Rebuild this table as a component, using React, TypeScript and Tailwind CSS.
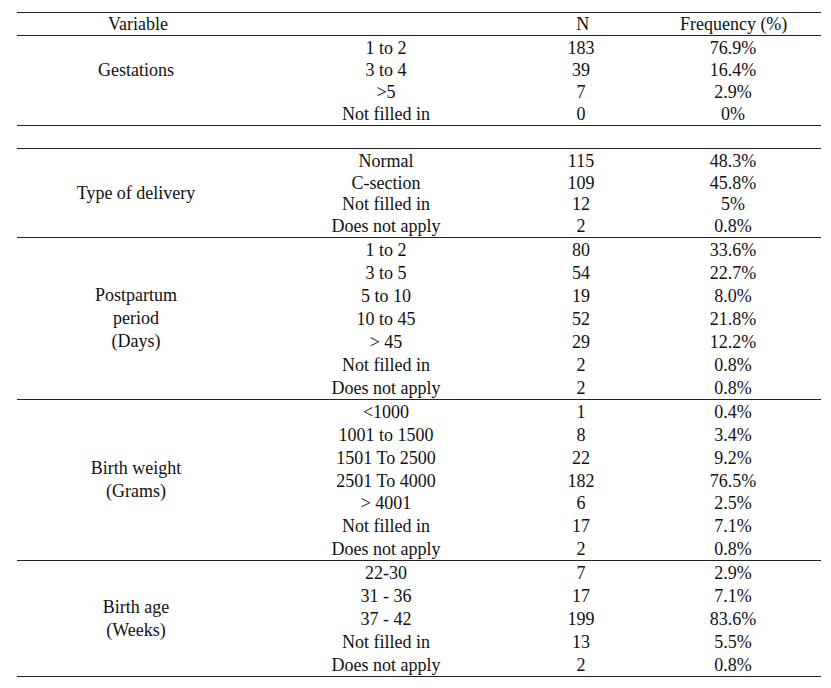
import React from 'react'

type Section = {
  label: string[]
  height: string
  labelPad?: string
  rows: [string, string, string][]
}

const sections: Section[] = [
  {
    label: ['Gestations'],
    height: 'h-[90px]',
    labelPad: 'pb-[21px]',
    rows: [
      ['1 to 2', '183', '76.9%'],
      ['3 to 4', '39', '16.4%'],
      ['>5', '7', '2.9%'],
      ['Not filled in', '0', '0%'],
    ],
  },
  {
    label: ['Type of delivery'],
    height: 'h-[89px]',
    rows: [
      ['Normal', '115', '48.3%'],
      ['C-section', '109', '45.8%'],
      ['Not filled in', '12', '5%'],
      ['Does not apply', '2', '0.8%'],
    ],
  },
  {
    label: ['Postpartum', 'period', '(Days)'],
    height: 'h-[162px]',
    rows: [
      ['1 to 2', '80', '33.6%'],
      ['3 to 5', '54', '22.7%'],
      ['5 to 10', '19', '8.0%'],
      ['10 to 45', '52', '21.8%'],
      ['> 45', '29', '12.2%'],
      ['Not filled in', '2', '0.8%'],
      ['Does not apply', '2', '0.8%'],
    ],
  },
  {
    label: ['Birth weight', '(Grams)'],
    height: 'h-[161px]',
    rows: [
      ['<1000', '1', '0.4%'],
      ['1001 to 1500', '8', '3.4%'],
      ['1501 To 2500', '22', '9.2%'],
      ['2501 To 4000', '182', '76.5%'],
      ['> 4001', '6', '2.5%'],
      ['Not filled in', '17', '7.1%'],
      ['Does not apply', '2', '0.8%'],
    ],
  },
  {
    label: ['Birth age', '(Weeks)'],
    height: 'h-[116px]',
    rows: [
      ['22-30', '7', '2.9%'],
      ['31 - 36', '17', '7.1%'],
      ['37 - 42', '199', '83.6%'],
      ['Not filled in', '13', '5.5%'],
      ['Does not apply', '2', '0.8%'],
    ],
  },
]

function Block({ s }: { s: Section }) {
  return (
    <div className={`flex border-t border-[#222] ${s.height}`}>
      <div className={`flex w-[244px] flex-col items-center justify-center leading-[23px] ${s.labelPad ?? ''}`}>
        {s.label.map((l) => (
          <div key={l}>{l}</div>
        ))}
      </div>
      <div className="flex min-h-0 flex-1 flex-col pt-px">
        {s.rows.map((r, i) => (
          <div key={i} className="flex min-h-0 flex-1 items-center">
            <div className="w-[262px] text-center">{r[0]}</div>
            <div className="w-[128px] text-center">{r[1]}</div>
            <div className="w-[176px] text-center">{r[2]}</div>
          </div>
        ))}
      </div>
    </div>
  )
}

export default function App() {
  return (
    <div className="min-h-[688px] bg-white pt-[12px] text-[18px] leading-[22px] text-[#111] [font-family:'Liberation_Serif',serif]">
      <div className="ml-[17px] w-[804px]">
        <div className="flex h-[23px] items-center border-t border-[#222]">
          <div className="w-[244px] text-center">Variable</div>
          <div className="w-[262px]" />
          <div className="w-[128px] text-center">N</div>
          <div className="w-[176px] text-center">Frequency (%)</div>
        </div>
        <Block s={sections[0]} />
        <div className="h-[23px] border-t border-[#222]" />
        {sections.slice(1).map((s) => (
          <Block key={s.label[0]} s={s} />
        ))}
        <div className="border-t border-[#222]" />
      </div>
    </div>
  )
}
